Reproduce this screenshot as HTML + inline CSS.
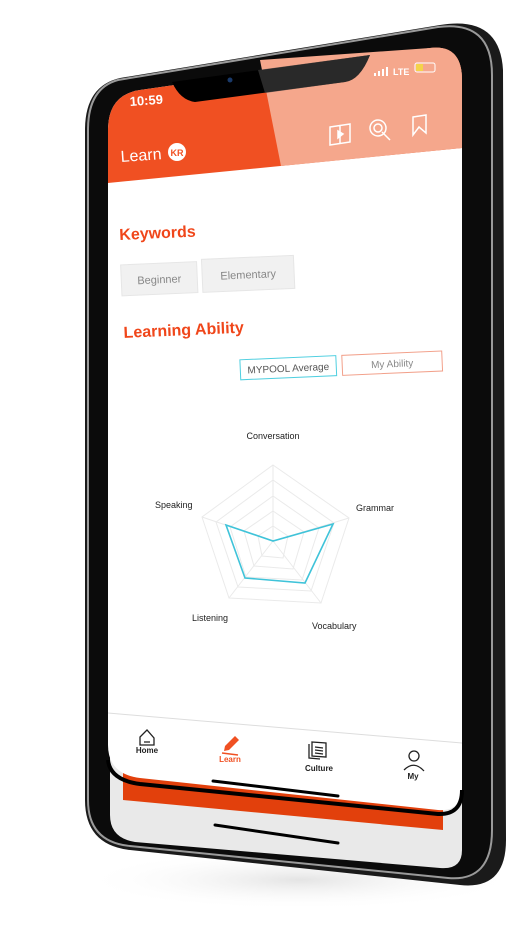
<!DOCTYPE html>
<html><head><meta charset="utf-8"><style>
html,body{margin:0;padding:0;background:#fff;width:506px;height:931px;overflow:hidden}
text{font-family:"Liberation Sans",sans-serif}
</style></head><body>
<svg width="506" height="931" viewBox="0 0 506 931" xmlns="http://www.w3.org/2000/svg">
<defs>
<radialGradient id="sh" cx="0.5" cy="0.5" r="0.5"><stop offset="0" stop-color="#e4e4e4"/><stop offset="1" stop-color="#fff" stop-opacity="0"/></radialGradient>
</defs>
<ellipse cx="300" cy="880" rx="220" ry="30" fill="url(#sh)"/>
<!-- phone back body -->
<path d="M120 78 L440 25 Q500 15 503 70 L506 840 Q506 890 460 885 L130 850 Q85 845 85 800 L85 130 Q85 86 120 78Z" fill="#1a1a1a"/>
<path d="M118 80 L438 27 Q492 20 492 75 L492 830 Q492 882 448 878 L130 846 Q88 842 88 800 L88 130 Q88 88 118 80Z" fill="#0b0b0b" stroke="#9a9a9a" stroke-width="2"/>
<!-- lower inner area -->
<path d="M110 700 L462 720 L462 850 Q462 870 440 868 L135 842 Q110 838 110 815Z" fill="#e9e9e9"/>
<polygon points="123,760 443,800 443,830 123,800" fill="#e2400c"/>
<path d="M215 825 L338 843" stroke="#000" stroke-width="3" stroke-linecap="round"/>
<!-- screen white -->
<path d="M140 90 L430 48 Q462 44 462 80 L462 785 Q462 812 438 810 L140 778 Q108 774 108 745 L108 130 Q108 95 140 90Z" fill="#fff"/>
<!-- header -->
<path d="M140 90 L430 48 Q462 44 462 80 L462 148 L108 183 L108 130 Q108 95 140 90Z" fill="#f05022"/>
<path d="M260 60 L430 48 Q462 44 462 80 L462 148 L281 166Z" fill="#f5a78c"/>
<!-- notch -->
<path d="M172 82 L370 55 Q360 80 345 82 L195 102 Q180 100 172 82Z" fill="#000"/>
<path d="M258 70 L370 55 Q360 80 345 82 L265 93Z" fill="#444" opacity=".6"/>
<circle cx="230" cy="80" r="2.5" fill="#1a3a6a"/>
<g fill="#fff">
<rect x="374" y="73" width="2" height="3"/><rect x="378" y="71" width="2" height="5"/><rect x="382" y="69" width="2" height="7"/><rect x="386" y="67" width="2" height="9"/>
</g>
<text x="393" y="75" font-size="9" fill="#fff" font-weight="bold">LTE</text>
<rect x="415" y="63" width="20" height="9" rx="2" fill="none" stroke="#fff" stroke-width="1"/><rect x="416" y="64" width="7" height="7" fill="#f4d34a"/>
<text x="130" y="106" font-size="13" fill="#fff" font-weight="bold" transform="rotate(-4 130 106)">10:59</text>
<text x="121" y="162" font-size="16" fill="#fff" transform="rotate(-4 121 162)">Learn</text>
<circle cx="177" cy="152" r="9" fill="#fff"/><text x="177" y="156" font-size="9" fill="#f05022" font-weight="bold" text-anchor="middle">KR</text>
<g fill="none" stroke="#fff" stroke-width="1.5">
<path d="M330 127 L350 124 L350 142 L330 145Z M340 126 L340 143"/>
<path d="M338 131 L343 134 L338 138Z" fill="#fff"/>
<circle cx="378" cy="128" r="8"/><circle cx="378" cy="128" r="4"/><path d="M382 132 L390 140"/>
<path d="M413 117 L426 115 L426 133 L419 127 L413 135Z"/>
</g>
<!-- content -->
<g transform="translate(0,-7) rotate(-2.5 280 300)">
<text x="122" y="240" font-size="16" fill="#f0461a" font-weight="bold">Keywords</text>
<rect x="122" y="265" width="76" height="31" fill="#f1f1f1" stroke="#e6e6e6"/>
<text x="160" y="285" font-size="11" fill="#888" text-anchor="middle">Beginner</text>
<rect x="203" y="263" width="92" height="33" fill="#f1f1f1" stroke="#e6e6e6"/>
<text x="249" y="284" font-size="11" fill="#888" text-anchor="middle">Elementary</text>
<text x="122" y="338" font-size="16" fill="#f0461a" font-weight="bold">Learning Ability</text>
<rect x="237" y="365" width="96" height="20" fill="#fff" stroke="#4fcfe0"/>
<text x="285" y="379" font-size="10" fill="#555" text-anchor="middle">MYPOOL Average</text>
<rect x="339" y="365" width="100" height="20" fill="#fff" stroke="#f2a08a"/>
<text x="389" y="379" font-size="10" fill="#888" text-anchor="middle">My Ability</text>
</g>
<!-- radar -->
<g fill="none" stroke="#eaeaea" stroke-width="1">
<polygon points="273,465 349,518 321,603 229,598 202,517"/>
<polygon points="273,480 334,523 311,591 238,587 216,522"/>
<polygon points="273,496 319,528 302,580 246,577 230,527"/>
<polygon points="273,511 304,532 293,569 254,566 244,531"/>
<polygon points="273,526 288,536 283,558 262,556 258,536"/>
<path d="M273 541 L273 465 M273 541 L349 518 M273 541 L321 603 M273 541 L229 598 M273 541 L202 517"/>
</g>
<polygon points="226,525 273,541 333,524 305,583 245,578" fill="none" stroke="#3fc3d9" stroke-width="1.6"/>
<g font-size="9" fill="#222">
<text x="273" y="439" text-anchor="middle">Conversation</text>
<text x="356" y="511">Grammar</text>
<text x="312" y="629">Vocabulary</text>
<text x="192" y="621">Listening</text>
<text x="155" y="508">Speaking</text>
</g>
<!-- tab bar -->
<path d="M108 713 L462 743" stroke="#ddd" stroke-width="1"/>
<g fill="none" stroke="#222" stroke-width="1.3">
<path d="M140 745 L140 737 L147 730 L154 738 L154 745Z M144 742 L150 742"/>
<path d="M309 744 L309 758 L320 759 M312 742 L326 743 L326 757 L312 756Z M315 747 L323 748 M315 750 L323 751 M315 753 L323 754"/>
<circle cx="414" cy="756" r="5"/><path d="M404 770 Q414 760 424 771"/>
</g>
<path d="M225 746 L235 736 L239 740 L229 750 L224 751Z" fill="#f05022"/><path d="M222 753 L238 755" stroke="#f05022" stroke-width="1.5"/>
<g font-size="8" font-weight="bold">
<text x="147" y="753" text-anchor="middle" fill="#222">Home</text>
<text x="230" y="762" text-anchor="middle" fill="#f05022">Learn</text>
<text x="319" y="771" text-anchor="middle" fill="#222">Culture</text>
<text x="413" y="779" text-anchor="middle" fill="#222">My</text>
</g>
<path d="M213 781 L338 796" stroke="#000" stroke-width="3" stroke-linecap="round"/>
<path d="M108 760 Q110 780 140 784 L438 814 Q462 815 462 790" fill="none" stroke="#000" stroke-width="4"/>
</svg>
</body></html>
